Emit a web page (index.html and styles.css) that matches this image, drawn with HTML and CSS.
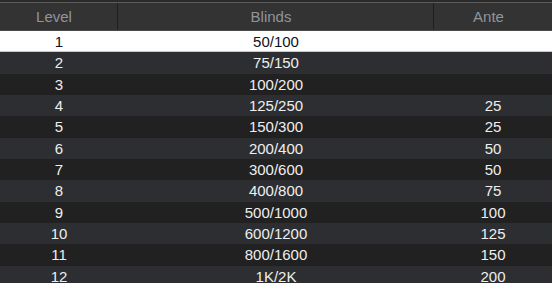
FILE: index.html
```
<!DOCTYPE html>
<html>
<head>
<meta charset="utf-8">
<link rel="stylesheet" href="styles.css">
</head>
<body>
<div class="table">
  <div class="topbar"></div>
  <div class="row head">
    <div class="cell c1">Level</div>
    <div class="cell c2">Blinds</div>
    <div class="cell c3">Ante</div>
  </div>
  <div class="row sel"><div class="cell">1</div><div class="cell">50/100</div><div class="cell"></div></div>
  <div class="row even"><div class="cell">2</div><div class="cell">75/150</div><div class="cell"></div></div>
  <div class="row odd"><div class="cell">3</div><div class="cell">100/200</div><div class="cell"></div></div>
  <div class="row even"><div class="cell">4</div><div class="cell">125/250</div><div class="cell">25</div></div>
  <div class="row odd"><div class="cell">5</div><div class="cell">150/300</div><div class="cell">25</div></div>
  <div class="row even"><div class="cell">6</div><div class="cell">200/400</div><div class="cell">50</div></div>
  <div class="row odd"><div class="cell">7</div><div class="cell">300/600</div><div class="cell">50</div></div>
  <div class="row even"><div class="cell">8</div><div class="cell">400/800</div><div class="cell">75</div></div>
  <div class="row odd"><div class="cell">9</div><div class="cell">500/1000</div><div class="cell">100</div></div>
  <div class="row even"><div class="cell">10</div><div class="cell">600/1200</div><div class="cell">125</div></div>
  <div class="row odd"><div class="cell">11</div><div class="cell">800/1600</div><div class="cell">150</div></div>
  <div class="row even"><div class="cell">12</div><div class="cell">1K/2K</div><div class="cell">200</div></div>
</div>
</body>
</html>
```
FILE: styles.css
```
html, body {
  margin: 0;
  padding: 0;
  background: #222222;
  overflow: hidden;
}
.table {
  width: 552px;
  font-family: "Liberation Sans", Arial, sans-serif;
  font-size: 15px;
}
.topbar {
  height: 2px;
  background: #2a2a2a;
  border-bottom: 1px solid #5c5c5c;
}
.row {
  display: grid;
  grid-template-columns: 118px 316px 118px;
  height: 21.333px;
  align-items: center;
  color: #eeeeee;
}
.cell {
  text-align: center;
  line-height: 21px;
  white-space: nowrap;
}
.head {
  height: 27px;
  background: #333333;
  border-bottom: 1px solid #4a4a4a;
  align-items: stretch;
  color: #8e959c;
}
.head .cell {
  line-height: 27px;
  padding-right: 9px;
}
.head .c1, .head .c2 {
  border-right: 1px solid #1f1f1f;
}
.sel {
  background: #ffffff;
  color: #111122;
  box-shadow: inset 0 -1px 0 #c8c8c8;
}
.even {
  background: #2c2e31;
}
.odd {
  background: #212121;
}
```
